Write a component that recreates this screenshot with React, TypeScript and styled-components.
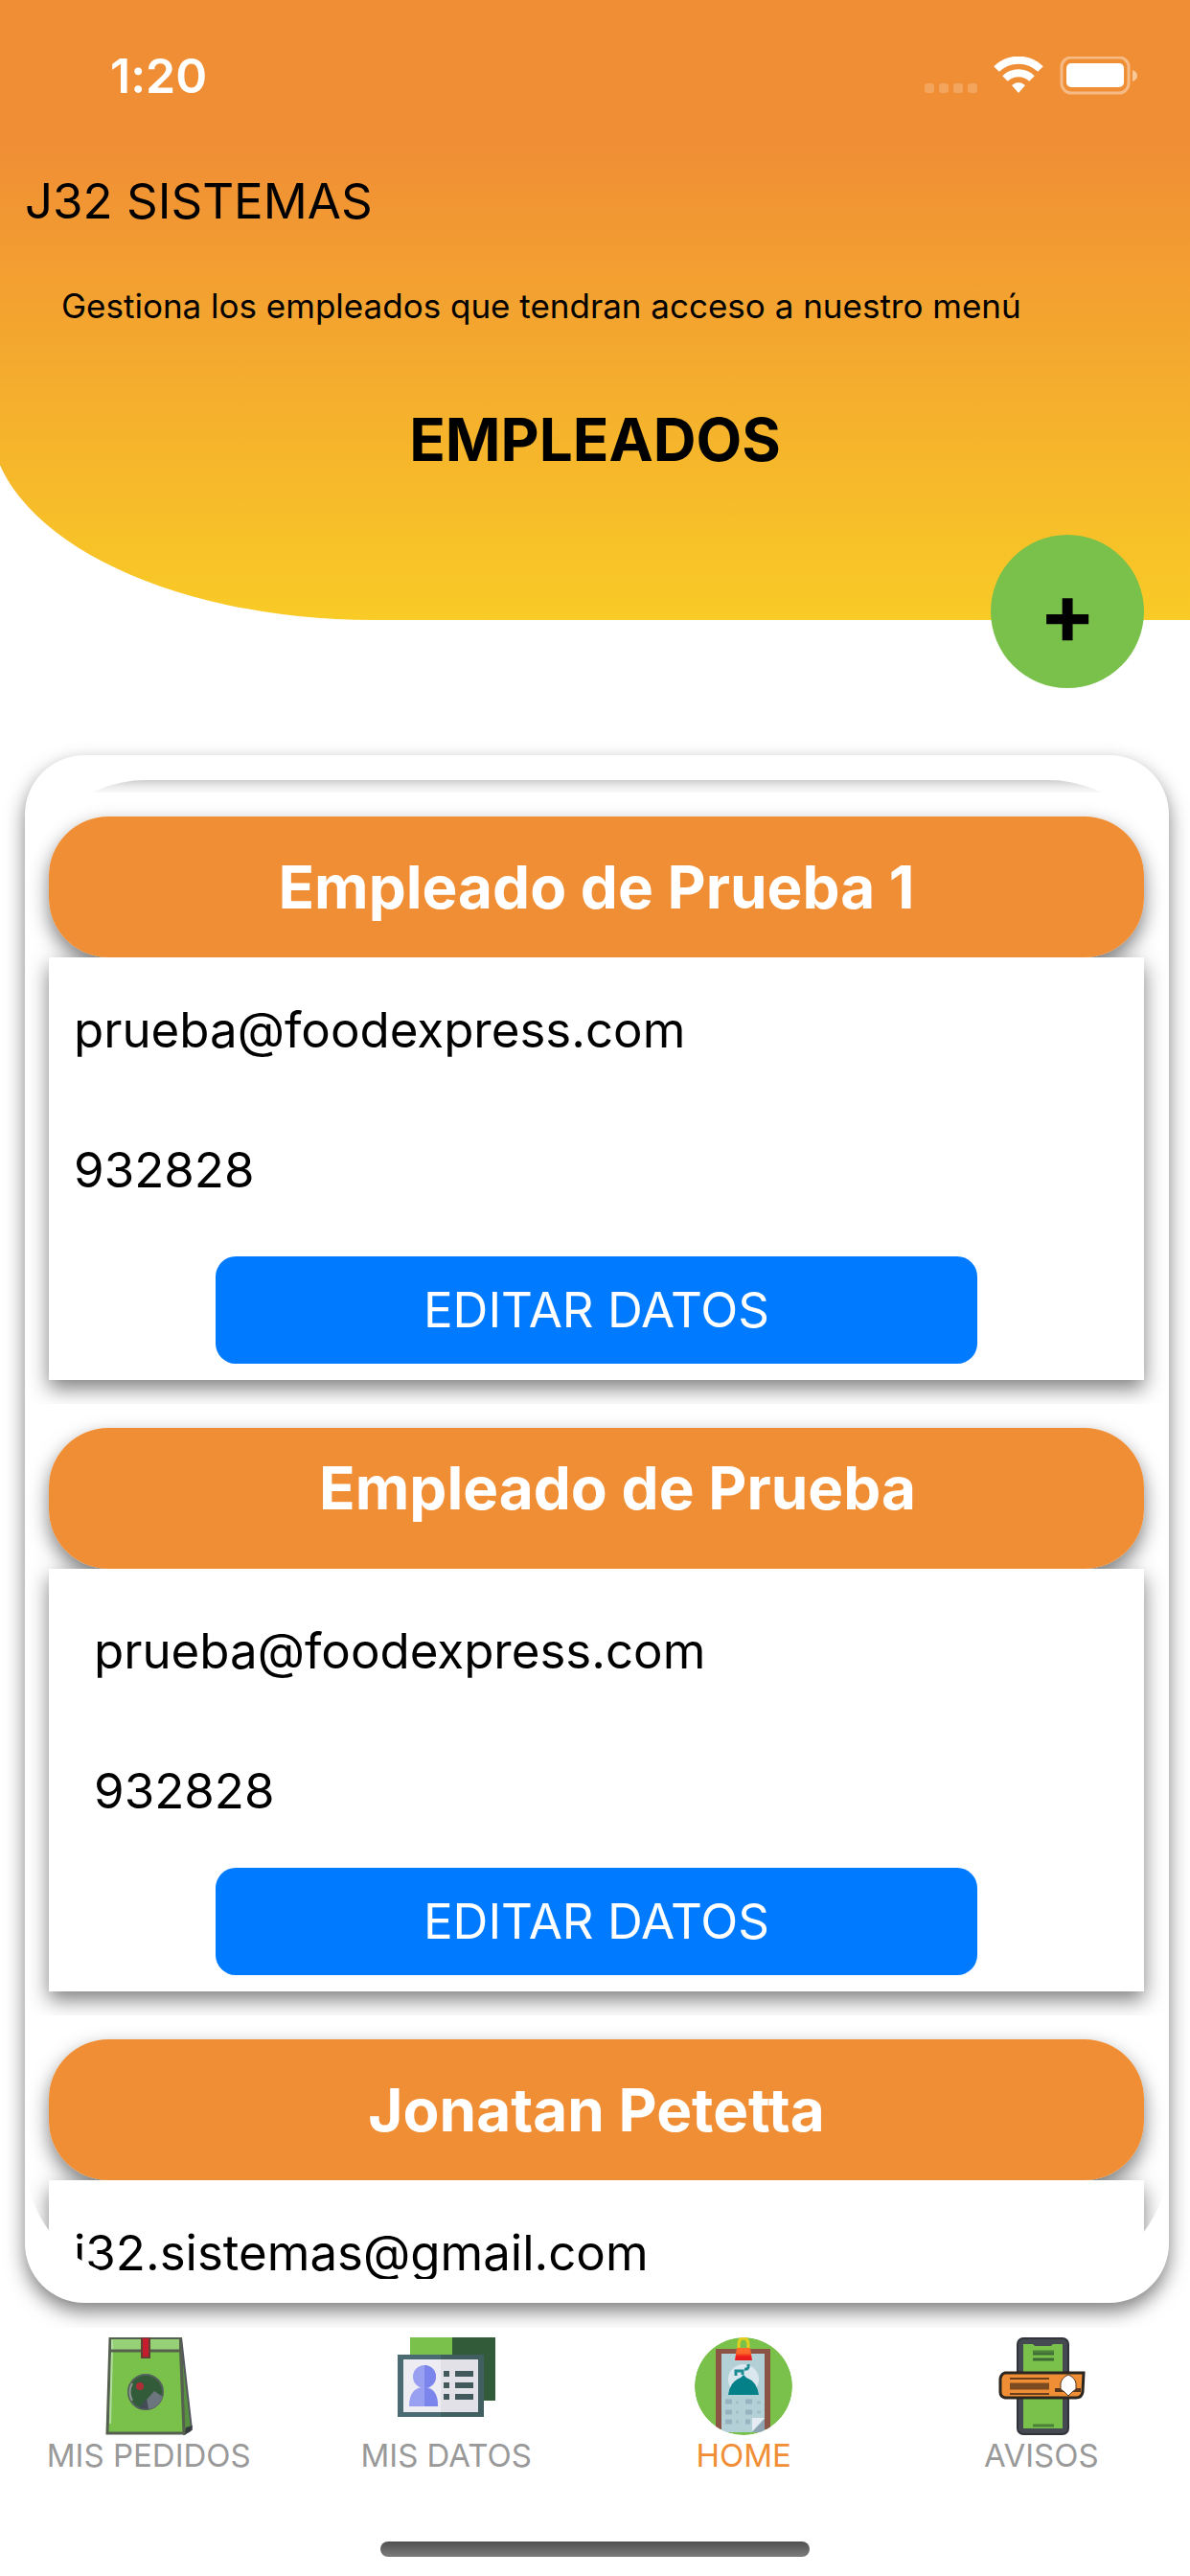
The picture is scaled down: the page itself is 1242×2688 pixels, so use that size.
import React from "react";
import styled, { createGlobalStyle } from "styled-components";

const ORANGE = "#f08e35";
const GREEN = "#79c14b";
const SHADOW = "0 9px 20px rgba(0, 0, 0, 0.5)";

const GlobalStyle = createGlobalStyle`
  *, *::before, *::after { box-sizing: border-box; }
  body {
    margin: 0;
    background: #fff;
    color: #000;
    font-family: Inter, Roboto, "Liberation Sans", sans-serif;
    font-variant-ligatures: none;
  }
  h1, h2, p, ul { margin: 0; padding: 0; }
  ul { list-style: none; }
  button { border: 0; font-family: inherit; cursor: pointer; }
`;

const Screen = styled.div`
  height: 100vh;
  display: flex;
  flex-direction: column;
  overflow: hidden;
`;

const Header = styled.header`
  position: relative;
  flex: none;
  padding-bottom: 148px;
  &::before {
    content: "";
    position: absolute;
    z-index: -1;
    inset: 0 0 0 -10px;
    border-bottom-left-radius: 400px 208px;
    background: linear-gradient(${ORANGE} 23%, #f9cb26 100%);
  }
`;

const StatusBar = styled.div`
  display: flex;
  justify-content: space-between;
  align-items: center;
  height: 132px;
  padding: 26px 55px 0 115px;
  color: #fff;
`;

const Clock = styled.time`
  font-size: 50px;
  line-height: 60px;
  font-weight: 600;
`;

const StatusIcons = styled.svg`
  display: block;
  width: 222px;
  height: 40px;
`;

const Company = styled.p`
  padding: 46px 26px 0;
  font-size: 51px;
  line-height: 64px;
`;

const Hint = styled.p`
  padding: 55px 64px 0;
  font-size: 35px;
  line-height: 44px;
`;

const Title = styled.h1`
  padding-top: 78px;
  font-size: 62px;
  line-height: 80px;
  font-weight: 700;
  text-align: center;
`;

const AddButton = styled.button`
  position: relative;
  flex: none;
  align-self: flex-end;
  width: 160px;
  height: 160px;
  margin: -89px 48px 0 0;
  padding: 4px 0 0;
  border-radius: 50%;
  background: ${GREEN};
  color: #000;
  font-size: 88px;
  line-height: 88px;
  font-weight: 700;
`;

const ListCard = styled.main`
  flex: 1;
  min-height: 0;
  margin: 70px 22px 26px 26px;
  padding: 26px 0 25px;
  border-radius: 62px;
  background: #fff;
  box-shadow: ${SHADOW};
`;

const EmployeeList = styled.ul`
  height: 100%;
  overflow: hidden;
  border-radius: 126px;
`;

const PreviousTail = styled.li`
  height: 13px;
  padding: 0 26px 0 25px;
  overflow: hidden;
  &::before {
    content: "";
    display: block;
    height: 60px;
    margin-top: -72px;
    background: #fff;
    box-shadow: ${SHADOW};
  }
`;

const Employee = styled.li`
  isolation: isolate;
  padding: 25px 26px 25px 25px;
  overflow: hidden;
`;

const Name = styled.h2<{ $inset: boolean }>`
  position: relative;
  height: 147px;
  padding: ${(p) => (p.$inset ? "23px 0 0 44px" : "34px 0 0")};
  border-radius: 62px;
  background: ${ORANGE};
  color: #fff;
  font-size: 62px;
  line-height: 80px;
  font-weight: 700;
  text-align: center;
  /* the shadow sits one layer down, so the details panel covers it */
  &::before {
    content: "";
    position: absolute;
    z-index: -1;
    inset: 0;
    border-radius: inherit;
    box-shadow: ${SHADOW};
  }
`;

const Details = styled.div`
  position: relative;
  z-index: -1;
  display: flex;
  flex-direction: column;
  height: 441px;
  background: #fff;
  box-shadow: ${SHADOW};
`;

const Fields = styled.div<{ $inset: boolean }>`
  flex: 1;
  display: flex;
  flex-direction: column;
  gap: 82px;
  padding: ${(p) => (p.$inset ? "54px 47px 0" : "44px 26px 0")};
  font-size: 51px;
  line-height: 64px;
`;

const EditButton = styled.button`
  align-self: center;
  flex: none;
  width: 64vw;
  height: 112px;
  margin-bottom: 17px;
  padding: 0;
  border-radius: 21px;
  background: #007bff;
  color: #fff;
  font-size: 51px;
  line-height: 64px;
`;

const BottomArea = styled.footer`
  position: relative;
  flex: none;
  padding: 10px 0 20px;
  background: #fff;
`;

const Tabs = styled.nav`
  display: grid;
  grid-template-columns: repeat(4, 1fr);
`;

const Tab = styled.a<{ $active?: boolean }>`
  display: flex;
  flex-direction: column;
  align-items: center;
  color: ${(p) => (p.$active ? ORANGE : "#999")};
  font-size: 33px;
  line-height: 42px;
  text-decoration: none;
  svg {
    display: block;
    width: 102px;
    height: 102px;
  }
`;

const HomeIndicator = styled.div`
  width: 36%;
  height: 16px;
  margin: 69px auto 0;
  border-radius: 8px;
  background: linear-gradient(#505050, #7c7c7c);
`;

const OrdersIcon = () => (
  <svg viewBox="0 0 102 102" aria-hidden="true">
    <path d="M85 0 96 96 88 101Z" fill="#579040" stroke="#54585f" strokeWidth="2" />
    <path d="M90 94 97 92 95 98 88 102Z" fill="#343b40" />
    <path d="M11 1H84L88 100H8Z" fill={GREEN} stroke="#56604f" strokeWidth="3" />
    <path d="M12 2H83V14H12Z" fill="#96d077" />
    <path d="M13 3V14L11 90" fill="none" stroke="#b2dda0" strokeWidth="2" />
    <path d="M10 14H84" stroke="#56604f" strokeWidth="3" />
    <path d="M44 0H52V21H44Z" fill="#c41d2d" stroke="#663d35" strokeWidth="2" />
    <circle cx="48" cy="57" r="18" fill="#325b39" stroke="#54605a" strokeWidth="2" />
    <path d="M41 74 57 56 66 62Q62 74 50 75Z" fill="#6c757d" />
    <path d="M41 74 49 64 51 75Z" fill="#424b56" />
    <path d="M34 66Q29 57 34 48" fill="none" stroke="#8b9690" strokeWidth="2" />
    <circle cx="42" cy="51" r="4" fill="#ad2e37" />
  </svg>
);

const ProfileIcon = () => (
  <svg viewBox="0 0 102 102" aria-hidden="true">
    <path d="M13 0H57V40H13Z" fill={GREEN} />
    <path d="M57 0H102V66H57Z" fill="#325b39" />
    <path d="M0 18H90V83H0Z" fill="#4b6b72" />
    <path d="M45 18H90V83H45Z" fill="#415e61" />
    <path d="M6 23H45V78H6Z" fill="#ececf2" />
    <path d="M45 23H84V78H45Z" fill="#e1e1e7" />
    <circle cx="28" cy="41" r="12" fill="#99a0f2" />
    <path d="M12 72Q12 52 28 52Q42 52 42 72Z" fill="#99a0f2" />
    <path d="M28 29A12 12 0 0 1 28 53Q42 53 42 72H28Z" fill="#7b85eb" />
    <path
      d="M48 38H54M60 38H79M48 50H54M60 50H79M48 62H54M60 62H79"
      stroke="#41595b"
      strokeWidth="6"
    />
  </svg>
);

const HomeIcon = () => (
  <svg viewBox="0 0 102 102" aria-hidden="true">
    <defs>
      <clipPath id="home-disc">
        <circle cx="51" cy="51" r="51" />
      </clipPath>
      <linearGradient id="home-clip" x1="0" y1="0" x2="0" y2="1">
        <stop offset="0.4" stopColor="#ff6a2b" />
        <stop offset="0.7" stopColor="#ea1b1b" />
      </linearGradient>
    </defs>
    <g clipPath="url(#home-disc)">
      <circle cx="51" cy="51" r="51" fill={GREEN} />
      <path d="M22 12H79V96H22Z" fill="#8b5444" />
      <path d="M28 17H73V90L64 99H28Z" fill="#b3d0d6" />
      <circle cx="51" cy="44" r="16" fill="#dbe7ee" />
      <path d="M35 60Q37 46 48 42L51 39 54 42Q65 46 67 60Z" fill="#048088" />
      <path d="M43 40V35H50V39M52 33Q57 34 56 28" fill="none" stroke="#1c8b92" strokeWidth="3" />
      <path
        d="M32 67H39M53 67H60M32 78H39M53 78H60M32 88H39M53 88H58"
        stroke="#98b2bf"
        strokeWidth="5"
      />
      <path
        d="M43 68H46M65 68H69M43 78H46M65 78H69M43 88H46"
        stroke="#a4bec8"
        strokeWidth="3"
      />
      <path d="M60 84H73L60 98Z" fill="#e4ebf2" />
      <path d="M73 85V99H60Z" fill="#8ea4b3" />
      <path d="M46 13V8Q46 1 51 1T56 8V13" fill="none" stroke="#e5cf1d" strokeWidth="3" />
      <path d="M44 11H58L60 24H42Z" fill="url(#home-clip)" />
    </g>
  </svg>
);

const AlertsIcon = () => (
  <svg viewBox="0 0 102 102" aria-hidden="true">
    <rect x="26" y="1" width="53" height="100" rx="6" fill="#454951" stroke="#30333a" strokeWidth="2" />
    <path d="M32 7H42L44 9H61L63 7H73V95H32Z" fill={GREEN} />
    <path d="M42 17H64M42 23H64" stroke="#3e6b35" strokeWidth="3" />
    <path d="M42 15H64M42 92H64" stroke="#4c803a" strokeWidth="3" />
    <path d="M13 37H95L94 57Q93 63 87 63H13Q8 62 8 57V43Q9 38 13 37Z" fill="#f08e35" stroke="#2b2620" strokeWidth="3" />
    <path d="M18 43H59M18 59H59" stroke="#6a401c" strokeWidth="2" />
    <path d="M18 51H59" stroke="#7c4b20" strokeWidth="7" />
    <path d="M65 55H92" stroke="#59371c" strokeWidth="4" />
    <path d="M71 54V48Q72 42 79 39Q86 42 87 48V54L83 57 79 61 75 57Z" fill="#fff" stroke="#59371c" strokeWidth="1" />
  </svg>
);

const employees = [
  { name: "Empleado de Prueba 1", email: "prueba@foodexpress.com", code: "932828", inset: false },
  { name: "Empleado de Prueba", email: "prueba@foodexpress.com", code: "932828", inset: true },
  { name: "Jonatan Petetta", email: "j32.sistemas@gmail.com", code: "", inset: false },
];

const tabs = [
  { label: "MIS PEDIDOS", Icon: OrdersIcon },
  { label: "MIS DATOS", Icon: ProfileIcon },
  { label: "HOME", Icon: HomeIcon, active: true },
  { label: "AVISOS", Icon: AlertsIcon },
];

export default function App() {
  return (
    <>
      <GlobalStyle />
      <Screen>
        <Header>
          <StatusBar>
            <Clock>1:20</Clock>
            <StatusIcons viewBox="0 0 222 40" aria-hidden="true">
              <g fill="#fff" fillOpacity="0.2">
                <rect x="0" y="28" width="10" height="10" rx="3" />
                <rect x="15" y="28" width="10" height="10" rx="3" />
                <rect x="30" y="28" width="10" height="10" rx="3" />
                <rect x="45" y="28" width="10" height="10" rx="3" />
              </g>
              <g fill="none" stroke="#fff" strokeWidth="8">
                <path d="M75 13A33 33 0 0 1 121 13" />
                <path d="M84 23A20 20 0 0 1 112 23" />
              </g>
              <path d="M91 30Q98 24 105 30L98 38Z" fill="#fff" />
              <rect x="143" y="1" width="70" height="37" rx="10" fill="none" stroke="#fff" strokeOpacity="0.4" strokeWidth="3" />
              <rect x="148" y="7" width="60" height="25" rx="5" fill="#fff" />
              <path d="M217 14Q222 16 222 20T217 26Z" fill="#fff" fillOpacity="0.5" />
            </StatusIcons>
          </StatusBar>
          <Company>J32 SISTEMAS</Company>
          <Hint>Gestiona los empleados que tendran acceso a nuestro menú</Hint>
          <Title>EMPLEADOS</Title>
        </Header>
        <AddButton type="button">+</AddButton>
        <ListCard>
          <EmployeeList>
            <PreviousTail aria-hidden="true" />
            {employees.map((e) => (
              <Employee key={e.name}>
                <Name $inset={e.inset}>{e.name}</Name>
                <Details>
                  <Fields $inset={e.inset}>
                    <p>{e.email}</p>
                    {e.code && <p>{e.code}</p>}
                  </Fields>
                  {e.code && <EditButton type="button">EDITAR DATOS</EditButton>}
                </Details>
              </Employee>
            ))}
          </EmployeeList>
        </ListCard>
        <BottomArea>
          <Tabs>
            {tabs.map(({ label, Icon, active }) => (
              <Tab key={label} href="#" $active={active}>
                <Icon />
                {label}
              </Tab>
            ))}
          </Tabs>
          <HomeIndicator />
        </BottomArea>
      </Screen>
    </>
  );
}
